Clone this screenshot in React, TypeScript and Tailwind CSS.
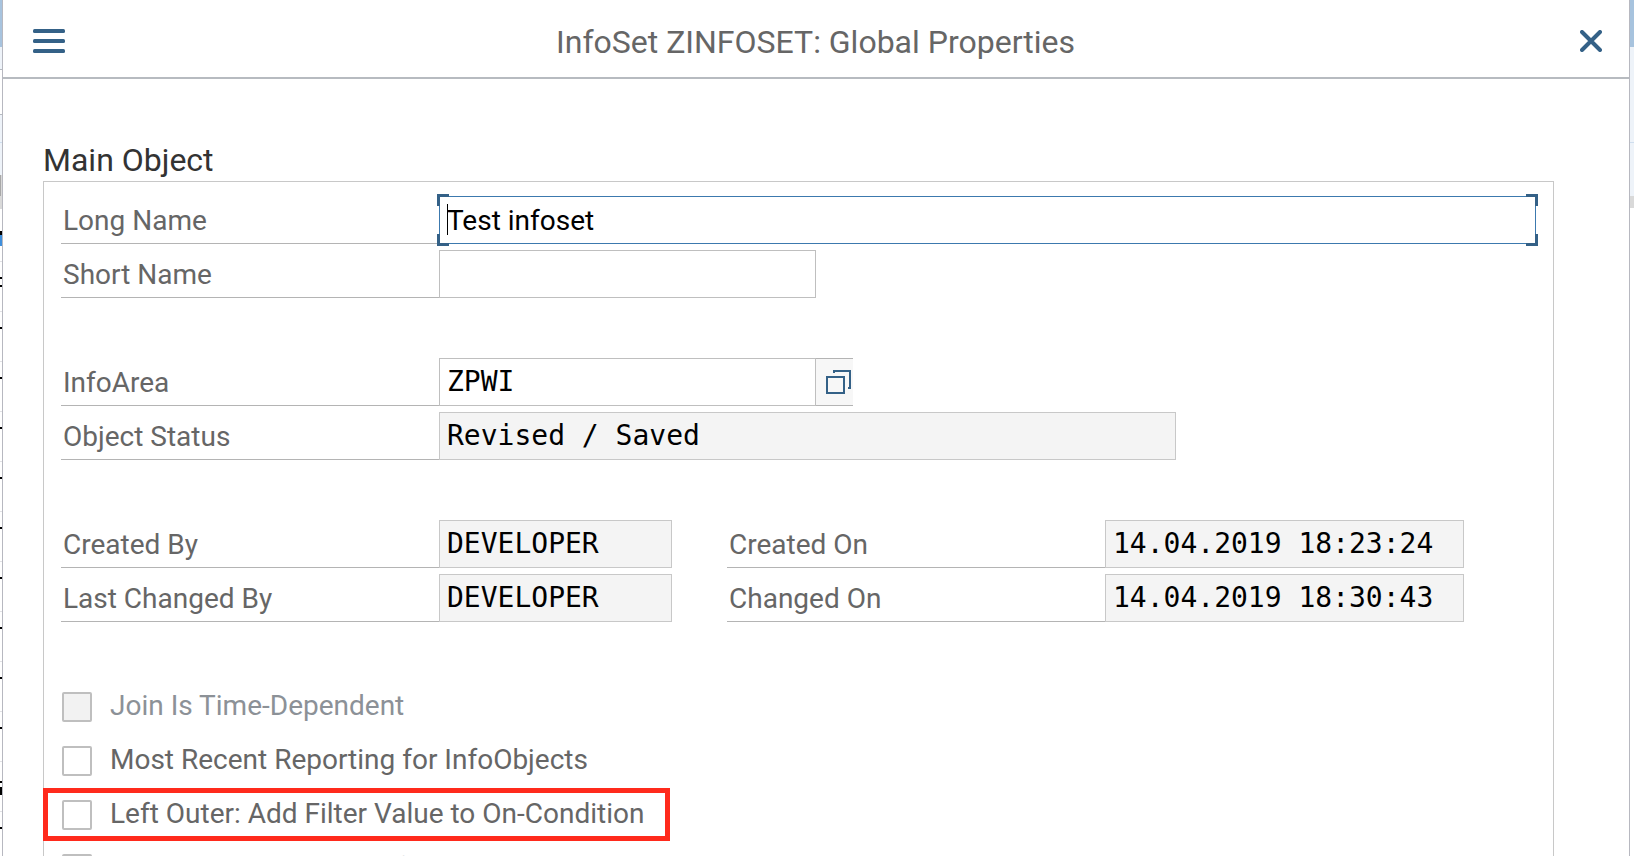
import { useState, type ReactNode } from 'react';

const labelClass =
  "flex h-12 w-[378px] shrink-0 items-center border-b border-[#b4b4b4] pl-0.5 pt-0.5 text-[28px] leading-9 text-[#666666]";
const monoClass =
  "h-12 min-w-0 border pb-0.5 pl-[7px] text-[28px] leading-9 text-black outline-none font-['DejaVu_Sans_Mono','Liberation_Mono',monospace]";

function FormRow({ children }: { children?: ReactNode }) {
  return <div className="flex h-12 items-stretch">{children}</div>;
}

function Label({ id, children }: { id: string; children: ReactNode }) {
  return (
    <label htmlFor={id} className={labelClass}>
      {children}
    </label>
  );
}

function ReadOnly({ id, value, width }: { id: string; value: string; width: string }) {
  return <input id={id} readOnly value={value} className={`${monoClass} ${width} border-[#c8c8c8] bg-[#f4f4f4]`} />;
}

function Check({
  id,
  label,
  disabled = false,
  highlighted = false,
}: {
  id: string;
  label: string;
  disabled?: boolean;
  highlighted?: boolean;
}) {
  return (
    <div className="relative flex h-12 items-center pl-px">
      <input
        id={id}
        type="checkbox"
        disabled={disabled}
        className="mt-0.5 size-[30px] shrink-0 appearance-none rounded-[2px] border-2 border-[#bfbfbf] bg-white checked:bg-[#346187] disabled:bg-[#f2f2f2]"
      />
      <label
        htmlFor={id}
        className={`pl-[18px] text-[28px] leading-9 ${disabled ? 'text-[#8c9197]' : 'text-[#666666]'}`}
      >
        {label}
      </label>
      {highlighted && (
        <div className="pointer-events-none absolute -bottom-[3px] -left-[18px] -top-0.5 w-[627px] border-[5px] border-[#ff2a1c]" />
      )}
    </div>
  );
}

function FocusCorners() {
  const base = 'pointer-events-none absolute size-3 border-[#346187]';
  return (
    <>
      <span className={`${base} -left-0.5 -top-0.5 border-l-[3px] border-t-[3px]`} />
      <span className={`${base} -right-0.5 -top-0.5 border-r-[3px] border-t-[3px]`} />
      <span className={`${base} -bottom-0.5 -left-0.5 border-b-[3px] border-l-[3px]`} />
      <span className={`${base} -bottom-0.5 -right-0.5 border-b-[3px] border-r-[3px]`} />
    </>
  );
}

function LeftEdge() {
  const marks = ['mid', 'dash', 'dash', 'dash', 'dash', 'dash', 'dash', 'dash', 'dash', 'dash', 'word', 'dash'];
  return (
    <div className="flex w-0.5 shrink-0 flex-col overflow-hidden">
      <div className="h-[47px] shrink-0 bg-[#a7c3de]" />
      <div className="h-[23px] shrink-0 border-b border-[#b5b9c0] bg-[#eef3f9]" />
      <div className="h-[45px] shrink-0 border-b border-[#b5b9c0]" />
      <div className="h-7 shrink-0 border-b border-[#cfdeee] bg-[#eef3f9]" />
      <div className="h-8 shrink-0 bg-[#eef3f9]" />
      <div className="h-[21px] shrink-0 border-l border-[#a8a8a8] bg-[#d9d9d9]" />
      <div className="h-[13px] shrink-0 bg-[#d9d9d9]" />
      <div className="flex h-[53px] shrink-0 flex-col border-b border-[#e2e2e6] pt-[22px]">
        <div className="h-1 bg-black" />
        <div className="h-[11px] bg-[#3f8fdc]" />
      </div>
      {marks.map((mark, i) => (
        <div key={i} className="flex h-[50px] shrink-0 flex-col border-b border-[#e2e2e6] pt-[15px]">
          {mark === 'dash' && <div className="h-0.5 bg-black" />}
          {mark === 'mid' && <div className="h-2.5 border-y-2 border-black" />}
          {mark === 'word' && <div className="mt-1 h-3.5 border-b-8 border-t-2 border-black" />}
        </div>
      ))}
    </div>
  );
}

function RightEdge() {
  return (
    <div className="flex w-1 shrink-0 flex-col">
      <div className="h-[47px] bg-[#a7c3de]" />
      <div className="h-24 border-b border-[#cfdeee] bg-[#eef3f9]" />
      <div className="h-[53px] bg-[#eef3f9]" />
      <div className="h-3 bg-[#d9d9d9]" />
    </div>
  );
}

export default function App() {
  const [longName, setLongName] = useState('Test infoset');
  const [shortName, setShortName] = useState('');
  const [area, setArea] = useState('ZPWI');

  return (
    <div className="flex h-screen overflow-hidden bg-white font-['Roboto','Liberation_Sans',sans-serif]">
      <LeftEdge />
      <main className="min-w-0 flex-1 border-x border-[#b7b8c0]">
        <header className="flex h-[79px] items-center border-b-2 border-[#b7bbc0] pl-[30px] pr-[27px] pt-1">
          <button type="button" aria-label="Menu" className="flex w-8">
            <svg viewBox="0 0 32 24" className="h-6 w-8" fill="#346187">
              <rect width="32" height="4" rx="1.5" />
              <rect y="10" width="32" height="4" rx="1.5" />
              <rect y="20" width="32" height="4" rx="1.5" />
            </svg>
          </button>
          <h1 className="flex-1 pr-3.5 pt-0.5 text-center text-[32px] leading-10 text-[#666666]">
            InfoSet ZINFOSET: Global Properties
          </h1>
          <button type="button" aria-label="Close" className="flex w-[22px]">
            <svg viewBox="0 0 22 22" className="size-[22px]" stroke="#346187" strokeWidth="4" strokeLinecap="round">
              <path d="M2 2 20 20M20 2 2 20" />
            </svg>
          </button>
        </header>

        <section className="pl-10 pr-[75px] pt-[60px]">
          <h2 className="h-[42px] text-[32px] leading-[42px] text-[#333333]">Main Object</h2>
          <div className="flex h-[760px] flex-col gap-1.5 border border-[#c8c8c8] px-[17px] pt-3.5">
            <FormRow>
              <Label id="long">Long Name</Label>
              <div className="relative min-w-0 flex-1">
                <input
                  id="long"
                  value={longName}
                  onChange={(e) => setLongName(e.target.value)}
                  className="h-12 w-full border border-[#3c79ae] bg-white pl-[7px] text-[28px] leading-9 text-black outline-none"
                />
                <span className="pointer-events-none absolute left-2 top-2 h-[31px] w-px bg-black" />
                <FocusCorners />
              </div>
            </FormRow>
            <FormRow>
              <Label id="short">Short Name</Label>
              <input
                id="short"
                value={shortName}
                onChange={(e) => setShortName(e.target.value)}
                className={`${monoClass} w-[377px] border-[#bfbfbf] bg-white`}
              />
            </FormRow>
            <FormRow />
            <FormRow>
              <Label id="area">InfoArea</Label>
              <input
                id="area"
                value={area}
                onChange={(e) => setArea(e.target.value)}
                className={`${monoClass} w-[377px] border-[#bfbfbf] bg-white`}
              />
              <button
                type="button"
                aria-label="Value help"
                className="flex w-[37px] items-center justify-end border-y border-[#b4b4b4] bg-[#f7f7f7] pr-0.5"
              >
                <svg viewBox="0 0 25 24" className="h-6 w-[25px]" fill="none" stroke="#346187" strokeWidth="2">
                  <path d="M1 7H18V23H1Z" />
                  <path d="M8 3V1H24V18H22" />
                </svg>
              </button>
            </FormRow>
            <FormRow>
              <Label id="status">Object Status</Label>
              <ReadOnly id="status" value="Revised / Saved" width="w-[737px]" />
            </FormRow>
            <FormRow />
            <FormRow>
              <Label id="created-by">Created By</Label>
              <ReadOnly id="created-by" value="DEVELOPER" width="mr-[55px] w-[233px]" />
              <Label id="created-on">Created On</Label>
              <ReadOnly id="created-on" value="14.04.2019 18:23:24" width="w-[359px]" />
            </FormRow>
            <FormRow>
              <Label id="changed-by">Last Changed By</Label>
              <ReadOnly id="changed-by" value="DEVELOPER" width="mr-[55px] w-[233px]" />
              <Label id="changed-on">Changed On</Label>
              <ReadOnly id="changed-on" value="14.04.2019 18:30:43" width="w-[359px]" />
            </FormRow>
            <FormRow />
            <Check id="time" label="Join Is Time-Dependent" disabled />
            <Check id="recent" label="Most Recent Reporting for InfoObjects" />
            <Check id="outer" label="Left Outer: Add Filter Value to On-Condition" highlighted />
            <Check id="grouping" label="Additional Grouping Before Join" disabled />
          </div>
        </section>
      </main>
      <RightEdge />
    </div>
  );
}
